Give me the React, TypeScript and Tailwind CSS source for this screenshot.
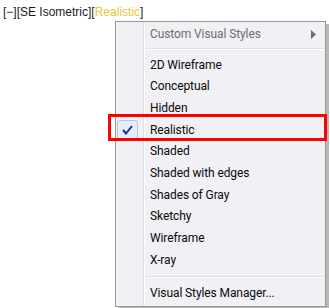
import React from "react";

const items = [
  "2D Wireframe",
  "Conceptual",
  "Hidden",
  "Realistic",
  "Shaded",
  "Shaded with edges",
  "Shades of Gray",
  "Sketchy",
  "Wireframe",
  "X-ray",
];

export default function App() {
  return (
    <div
      className="relative w-[330px] h-[308px] bg-white overflow-hidden"
      style={{ fontFamily: 'Roboto, "Noto Sans", sans-serif' }}
    >
      <div
        className="pl-[3px] pt-[4px] text-[12px] leading-[16px] text-[#1a1a1a]"
        style={{ fontFamily: '"Liberation Sans", Arial, sans-serif' }}
      >
        [−][SE Isometric][<span className="text-[#e8c53a]">Realistic</span>]
      </div>

      {/* shadow */}
      <div className="absolute left-[118px] top-[24px] w-[211px] h-[285px] bg-[#8a8a8a]/60" />
      {/* menu */}
      <div className="absolute left-[115px] top-[21px] w-[211px] h-[286px] border border-[#979797] bg-[#f1f0f5] flex">
        <div className="w-[28px] shrink-0 border-r border-[#e0dfe3] relative">
          <div className="absolute right-[-2px] top-0 bottom-0 w-px bg-white" />
        </div>
        <div className="flex-1 flex flex-col pt-[1px] text-[12px] tracking-[-0.1px] text-[#0a0a0a]">
          <div className="h-[22px] shrink-0 flex items-center pl-[6px] pr-[9px] text-[#6d6d6d]">
            <span className="flex-1">Custom Visual Styles</span>
            <svg width="5" height="9" viewBox="0 0 5 9">
              <path d="M0 0 L5 4.5 L0 9 Z" fill="#6d6d6d" />
            </svg>
          </div>
          <div className="h-[9px] shrink-0 pt-[3px] pl-[1px]">
            <div className="w-full h-px bg-[#e0dfe3] border-b border-white box-content" />
          </div>
          {items.map((t) => (
            <div key={t} className="h-[21.67px] shrink-0 flex items-center pl-[6px] relative">
              {t === "Realistic" && (
                <div className="absolute left-[-27px] top-[1px] w-[21px] h-[20px] rounded-[3px] border border-[#a8c9ec] bg-[#e8eef8] flex items-center justify-center">
                  <svg width="11" height="10" viewBox="0 0 11 10">
                    <path d="M1 5 L4 8.5 L10 1" stroke="#1c2f9a" strokeWidth="2" fill="none" />
                  </svg>
                </div>
              )}
              {t}
            </div>
          ))}
          <div className="h-[11px] pt-[5px] pl-[1px] shrink-0">
            <div className="w-full h-px bg-[#e0dfe3] border-b border-white box-content" />
          </div>
          <div className="h-[22px] shrink-0 flex items-center pl-[6px]">Visual Styles Manager...</div>
        </div>
      </div>

      {/* red highlight */}
      <div className="absolute left-[108px] top-[114px] w-[219px] h-[27px] border-[3px] border-[#ff0000]" />
    </div>
  );
}
